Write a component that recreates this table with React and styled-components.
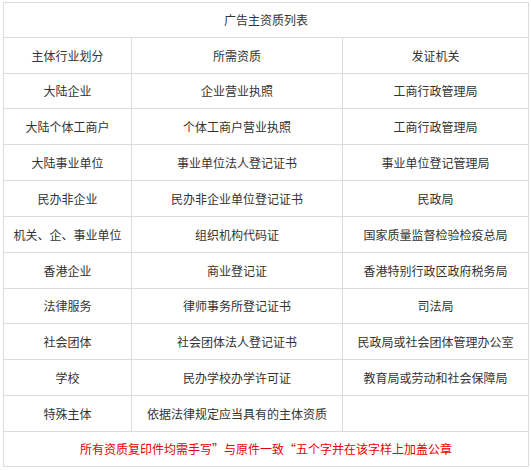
import React from "react";
import styled, { createGlobalStyle } from "styled-components";

const Global = createGlobalStyle`
  html, body { margin: 0; padding: 0; background: #fff; }
  body { font-family: "Noto Sans CJK SC", "Microsoft YaHei", sans-serif; }
`;

const Page = styled.div`
  padding: 2px 3px;
`;

const Grid = styled.div`
  display: grid;
  grid-template-columns: 127px 210px 185px;
  gap: 1px;
  padding: 1px;
  width: 524px;
  background: #dcdcdc;
`;

const Cell = styled.div`
  background: #fff;
  height: ${(p) => p.$h}px;
  display: flex;
  align-items: center;
  justify-content: center;
  font-size: 12px;
  line-height: 1;
  color: ${(p) => (p.$red ? "#e60000" : "#333")};
  grid-column: ${(p) => (p.$span ? "1 / -1" : "auto")};
  white-space: nowrap;
`;

const rows = [
  ["主体行业划分", "所需资质", "发证机关"],
  ["大陆企业", "企业营业执照", "工商行政管理局"],
  ["大陆个体工商户", "个体工商户营业执照", "工商行政管理局"],
  ["大陆事业单位", "事业单位法人登记证书", "事业单位登记管理局"],
  ["民办非企业", "民办非企业单位登记证书", "民政局"],
  ["机关、企、事业单位", "组织机构代码证", "国家质量监督检验检疫总局"],
  ["香港企业", "商业登记证", "香港特别行政区政府税务局"],
  ["法律服务", "律师事务所登记证书", "司法局"],
  ["社会团体", "社会团体法人登记证书", "民政局或社会团体管理办公室"],
  ["学校", "民办学校办学许可证", "教育局或劳动和社会保障局"],
  ["特殊主体", "依据法律规定应当具有的主体资质", ""],
];

const heights = [35, 34, 35, 35, 35, 35, 35, 34, 35, 35, 35];

export default function App() {
  return (
    <Page>
      <Global />
      <Grid>
        <Cell $span $h={34}>广告主资质列表</Cell>
        {rows.map((r, i) =>
          r.map((t, j) => (
            <Cell key={`${i}-${j}`} $h={heights[i]}>
              {t}
            </Cell>
          ))
        )}
        <Cell $span $red $h={34}>
          所有资质复印件均需手写”与原件一致“五个字并在该字样上加盖公章
        </Cell>
      </Grid>
    </Page>
  );
}
